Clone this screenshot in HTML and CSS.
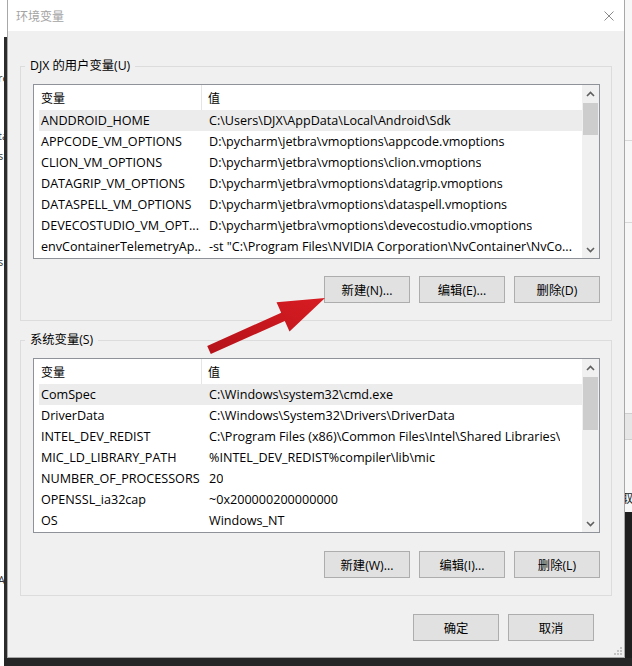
FILE: index.html
```html
<!DOCTYPE html>
<html lang="zh-CN">
<head>
<meta charset="utf-8">
<title>环境变量</title>
<link rel="stylesheet" href="styles.css">
</head>
<body>
<div class="desktop">
  <div class="bg-left"><span class="frag f1">re</span><span class="frag f2">ta</span><span class="frag f3">s</span><span class="frag f4">s</span><span class="frag f5">A:</span></div>
  <div class="bg-right"><div class="rb rb1"></div><div class="rb rb2"></div><div class="rb-band"></div><span class="rb-text">取</span><div class="rb-dark"></div></div>
  <div class="bg-bottom"></div>

  <div class="dialog">
    <div class="titlebar">
      <span class="title">环境变量</span>
      <span class="close">
        <svg width="10" height="10" viewBox="0 0 10 10"><path d="M0.5 0.5 L9.5 9.5 M9.5 0.5 L0.5 9.5" stroke="#8a8a8a" stroke-width="1" fill="none"/></svg>
      </span>
    </div>
    <div class="dlg-body">
      <fieldset class="group">
        <legend class="legend">DJX 的用户变量(U)</legend>
        <div class="group-inner">
          <div class="list">
            <div class="lv">
              <div class="lv-head"><div class="h1">变量</div><div class="h2">值</div></div>
              <div class="lv-row sel"><div class="c1">ANDDROID_HOME</div><div class="c2">C:\Users\DJX\AppData\Local\Android\Sdk</div></div>
              <div class="lv-row"><div class="c1">APPCODE_VM_OPTIONS</div><div class="c2">D:\pycharm\jetbra\vmoptions\appcode.vmoptions</div></div>
              <div class="lv-row"><div class="c1">CLION_VM_OPTIONS</div><div class="c2">D:\pycharm\jetbra\vmoptions\clion.vmoptions</div></div>
              <div class="lv-row"><div class="c1">DATAGRIP_VM_OPTIONS</div><div class="c2">D:\pycharm\jetbra\vmoptions\datagrip.vmoptions</div></div>
              <div class="lv-row"><div class="c1">DATASPELL_VM_OPTIONS</div><div class="c2">D:\pycharm\jetbra\vmoptions\dataspell.vmoptions</div></div>
              <div class="lv-row"><div class="c1">DEVECOSTUDIO_VM_OPT...</div><div class="c2">D:\pycharm\jetbra\vmoptions\devecostudio.vmoptions</div></div>
              <div class="lv-row"><div class="c1">envContainerTelemetryAp...</div><div class="c2">-st "C:\Program Files\NVIDIA Corporation\NvContainer\NvCo...</div></div>
            </div>
            <div class="sbar">
              <div class="sb-btn"><svg width="9" height="6" viewBox="0 0 9 6"><polyline points="1,5 4.5,1.5 8,5" stroke="#5f5f5f" stroke-width="1.6" fill="none"/></svg></div>
              <div class="sb-thumb t1"></div>
              <div class="sb-fill"></div>
              <div class="sb-btn"><svg width="9" height="6" viewBox="0 0 9 6"><polyline points="1,1 4.5,4.5 8,1" stroke="#5f5f5f" stroke-width="1.6" fill="none"/></svg></div>
            </div>
          </div>
          <div class="btn-row">
            <button class="btn">新建(N)...</button>
            <button class="btn">编辑(E)...</button>
            <button class="btn">删除(D)</button>
          </div>
        </div>
      </fieldset>

      <fieldset class="group group2">
        <legend class="legend">系统变量(S)</legend>
        <div class="group-inner g2">
          <div class="list">
            <div class="lv">
              <div class="lv-head"><div class="h1">变量</div><div class="h2">值</div></div>
              <div class="lv-row sel"><div class="c1">ComSpec</div><div class="c2">C:\Windows\system32\cmd.exe</div></div>
              <div class="lv-row"><div class="c1">DriverData</div><div class="c2">C:\Windows\System32\Drivers\DriverData</div></div>
              <div class="lv-row"><div class="c1">INTEL_DEV_REDIST</div><div class="c2">C:\Program Files (x86)\Common Files\Intel\Shared Libraries\</div></div>
              <div class="lv-row"><div class="c1">MIC_LD_LIBRARY_PATH</div><div class="c2">%INTEL_DEV_REDIST%compiler\lib\mic</div></div>
              <div class="lv-row"><div class="c1">NUMBER_OF_PROCESSORS</div><div class="c2">20</div></div>
              <div class="lv-row"><div class="c1">OPENSSL_ia32cap</div><div class="c2">~0x200000200000000</div></div>
              <div class="lv-row"><div class="c1">OS</div><div class="c2">Windows_NT</div></div>
            </div>
            <div class="sbar">
              <div class="sb-btn"><svg width="9" height="6" viewBox="0 0 9 6"><polyline points="1,5 4.5,1.5 8,5" stroke="#5f5f5f" stroke-width="1.6" fill="none"/></svg></div>
              <div class="sb-thumb t2"></div>
              <div class="sb-fill"></div>
              <div class="sb-btn"><svg width="9" height="6" viewBox="0 0 9 6"><polyline points="1,1 4.5,4.5 8,1" stroke="#5f5f5f" stroke-width="1.6" fill="none"/></svg></div>
            </div>
          </div>
          <div class="btn-row">
            <button class="btn">新建(W)...</button>
            <button class="btn">编辑(I)...</button>
            <button class="btn">删除(L)</button>
          </div>
        </div>
      </fieldset>

      <div class="ok-row">
        <button class="btn">确定</button>
        <button class="btn">取消</button>
      </div>
    </div>
    <svg class="grip" width="10" height="10" viewBox="0 0 10 10">
      <rect x="8" y="2" width="2" height="2" fill="#c4c4c4"/>
      <rect x="5" y="5" width="2" height="2" fill="#c4c4c4"/>
      <rect x="8" y="5" width="2" height="2" fill="#c4c4c4"/>
      <rect x="2" y="8" width="2" height="2" fill="#c4c4c4"/>
      <rect x="5" y="8" width="2" height="2" fill="#c4c4c4"/>
      <rect x="8" y="8" width="2" height="2" fill="#c4c4c4"/>
    </svg>
  </div>

  <svg class="arrow" width="632" height="666" viewBox="0 0 632 666">
    <defs>
      <linearGradient id="ag" x1="0" y1="1" x2="1" y2="0">
        <stop offset="0" stop-color="#b5121a"/>
        <stop offset="1" stop-color="#d71c22"/>
      </linearGradient>
    </defs>
    <polygon points="207.2,345.9 281.2,312.7 276.5,302.2 325,298 289.5,331.4 284.8,320.9 210.8,354.1" fill="url(#ag)"/>
  </svg>
</div>
</body>
</html>
```
FILE: styles.css
```css
* { box-sizing: border-box; }

html, body {
  margin: 0;
  padding: 0;
}

body {
  width: 632px;
  height: 666px;
  overflow: hidden;
  background: #ffffff;
  font-family: "Open Sans", "Noto Sans CJK SC", sans-serif;
  font-size: 12px;
  color: #000;
}

.desktop {
  position: relative;
  width: 632px;
  height: 666px;
  overflow: hidden;
  padding-left: 7px;
}

/* background windows */
.bg-left {
  position: absolute;
  left: 0;
  top: 0;
  width: 7px;
  height: 666px;
  background: #ffffff;
}
.bg-left::after {
  content: "";
  position: absolute;
  left: 4px;
  top: 37px;
  width: 3px;
  bottom: 0;
  background: #2b2b2b;
}
.frag {
  position: absolute;
  left: -2px;
  font-size: 11px;
  line-height: 12px;
  color: #333;
}
.f1 { top: 72px; }
.f2 { top: 130px; }
.f3 { top: 150px; }
.f4 { top: 256px; }
.f5 { top: 574px; }

.bg-right {
  position: absolute;
  left: 625px;
  top: 0;
  width: 7px;
  height: 666px;
  background: #f7f7f7;
}
.rb {
  position: absolute;
  left: 0;
  right: 0;
  height: 1px;
  background: #d8d8d8;
}
.rb1 { top: 140px; }
.rb2 { top: 222px; }
.rb-band {
  position: absolute;
  left: 0;
  right: 0;
  top: 413px;
  height: 27px;
  background: #e6e6e6;
  border-top: 1px solid #cfcfcf;
  border-bottom: 1px solid #cfcfcf;
}
.rb-text {
  position: absolute;
  left: -4px;
  top: 489px;
  font-size: 12px;
  color: #222;
}
.rb-dark {
  position: absolute;
  left: 0;
  right: 0;
  top: 512px;
  bottom: 0;
  background: #1f1f1f;
}

.bg-bottom {
  position: absolute;
  left: 4px;
  right: 0;
  top: 658px;
  height: 8px;
  background: #262626;
}

/* dialog */
.dialog {
  position: relative;
  width: 618px;
  height: 658px;
  background: #f0f0f0;
  border: 1px solid #a8a8a8;
  border-top: none;
  display: flex;
  flex-direction: column;
}

.titlebar {
  height: 31px;
  background: #ffffff;
  display: flex;
  align-items: center;
  justify-content: space-between;
  padding-left: 8px;
}
.title {
  color: #a3a3a3;
  font-size: 12px;
}
.close {
  width: 30px;
  height: 31px;
  display: flex;
  align-items: center;
  justify-content: center;
}

.dlg-body {
  padding: 27px 12px 0 12px;
  display: flex;
  flex-direction: column;
}

.group {
  margin: 0;
  padding: 0;
  min-width: 0;
  border: 1px solid #dcdcdc;
}
.group2 {
  margin-top: 11px;
}
.legend {
  margin-left: 4px;
  padding: 0 5px;
  font-size: 12.3px;
  line-height: 16px;
  color: #000;
}

.group-inner {
  padding: 10px 11px 17px 12px;
  display: flex;
  flex-direction: column;
}

.list {
  height: 175px;
  border: 1px solid #8f9399;
  background: #ffffff;
  display: flex;
}

.lv {
  flex: 1;
  min-width: 0;
  overflow: hidden;
  display: flex;
  flex-direction: column;
  font-size: 12.6px;
}

.lv-head {
  height: 25px;
  display: flex;
  align-items: stretch;
  flex-shrink: 0;
  font-size: 12px;
}
.h1 {
  width: 168px;
  padding-left: 7px;
  border-right: 1px solid #e5e5e5;
  display: flex;
  align-items: center;
}
.h2 {
  padding-left: 6px;
  display: flex;
  align-items: center;
}

.lv-row {
  height: 21px;
  margin-left: 5px;
  display: flex;
  align-items: center;
  flex-shrink: 0;
  white-space: nowrap;
}
.lv-row.sel {
  background: #ececec;
}
.c1 {
  width: 163px;
  padding-left: 2px;
  overflow: hidden;
  flex-shrink: 0;
}
.c2 {
  padding-left: 7px;
  overflow: hidden;
}

.sbar {
  width: 17px;
  flex-shrink: 0;
  background: #f0f0f0;
  display: flex;
  flex-direction: column;
}
.sb-btn {
  height: 17px;
  display: flex;
  align-items: center;
  justify-content: center;
  flex-shrink: 0;
}
.sb-thumb {
  margin: 1px 1px 0 1px;
  background: #cdcdcd;
  flex-shrink: 0;
}
.t1 { height: 32px; }
.t2 { height: 53px; }
.sb-fill { flex: 1; }

.btn-row {
  margin-top: 17px;
  display: flex;
  justify-content: flex-end;
  gap: 9px;
}
.g2 .btn-row {
  margin-top: 18px;
}

.btn {
  width: 86px;
  height: 27px;
  margin: 0;
  padding: 0;
  background: #e1e1e1;
  border: 1px solid #adadad;
  border-radius: 0;
  font-family: "Open Sans", "Noto Sans CJK SC", sans-serif;
  font-size: 12.3px;
  color: #000;
}

.ok-row {
  margin-top: 18px;
  padding-right: 18px;
  display: flex;
  justify-content: flex-end;
  gap: 9px;
}

.grip {
  position: absolute;
  right: 2px;
  bottom: 2px;
}

.arrow {
  position: absolute;
  left: 0;
  top: 0;
  pointer-events: none;
}
```
